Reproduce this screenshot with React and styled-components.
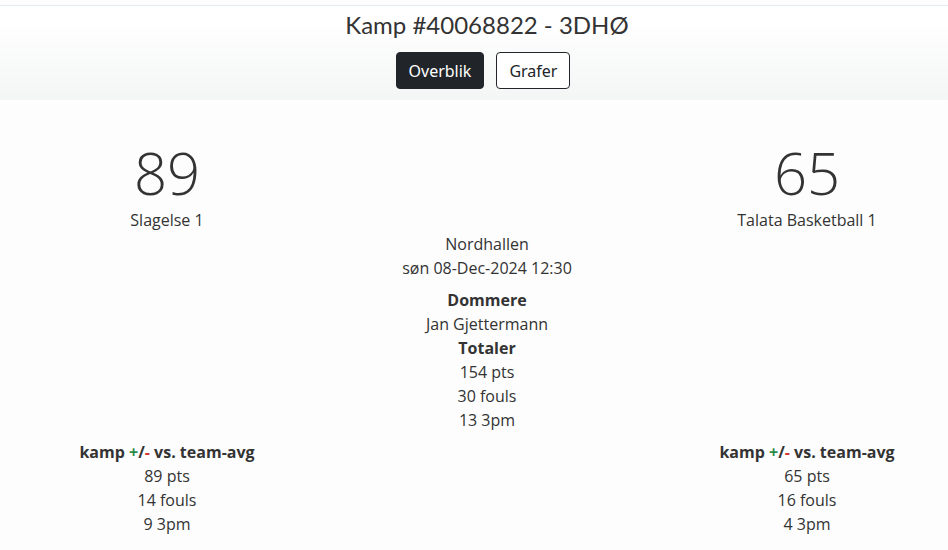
import React from 'react';
import styled, { createGlobalStyle } from 'styled-components';

const GlobalStyle = createGlobalStyle`
  html, body {
    margin: 0;
    padding: 0;
    background: #fdfdfd;
    overflow: hidden;
  }
  body {
    font-family: 'Open Sans', 'Noto Sans', sans-serif;
    font-size: 16px;
    line-height: 24px;
    color: #333;
  }
`;

const Page = styled.div`
  width: 948px;
  height: 550px;
  background: #fdfdfd;
`;

const Header = styled.header`
  margin-top: 5px;
  border-top: 1px solid #e1ebf4;
  background: linear-gradient(to bottom, #ffffff 15%, #f4f5f5 100%);
  height: 94px;
`;

const Container = styled.div`
  width: 960px;
  margin-left: 7px;
  box-sizing: border-box;
`;

const Title = styled.h1`
  margin: 0;
  padding-top: 3px;
  text-align: center;
  font-family: Lato, 'Open Sans', sans-serif;
  font-weight: 400;
  font-size: 24px;
  line-height: 31px;
  color: #333;
`;

const Tabs = styled.div`
  display: flex;
  justify-content: center;
  gap: 12px;
  margin-top: 12px;
  padding-right: 8px;
`;

const Tab = styled.button`
  font-family: 'Noto Sans', 'Open Sans', sans-serif;
  font-size: 16px;
  line-height: 22px;
  height: 37px;
  padding: 0 12px;
  border-radius: 4px;
  border: 1px solid #212529;
  background: ${({ $active }) => ($active ? '#212529' : '#fff')};
  color: ${({ $active }) => ($active ? '#fff' : '#212529')};
`;

const Grid = styled.main`
  display: grid;
  grid-template-columns: repeat(3, 320px);
  padding-top: 38px;
  text-align: center;
`;

const Cell = styled.div`
  grid-column: ${({ $col }) => $col};
  margin-top: ${({ $gap }) => $gap || 0}px;
`;

const Score = styled.div`
  font-size: 58px;
  line-height: 64px;
  margin: 3px 0;
  font-weight: 300;
  color: #333;
`;

const Line = styled.div`
  margin-top: ${({ $gap }) => $gap || 0}px;
`;

const Bold = styled.div`
  font-weight: 700;
  color: #333;
  margin-top: ${({ $gap }) => $gap || 0}px;
`;

const Plus = styled.span`
  color: #2e8b45;
`;

const Minus = styled.span`
  color: #d9382f;
`;

const TeamHead = ({ score, name }) => (
  <>
    <Score>{score}</Score>
    <Line>{name}</Line>
  </>
);

const Stats = ({ pts, fouls, threes }) => (
  <>
    <Bold>
      kamp <Plus>+</Plus>/<Minus>-</Minus> vs. team-avg
    </Bold>
    <Line>{pts} pts</Line>
    <Line>{fouls} fouls</Line>
    <Line>{threes} 3pm</Line>
  </>
);

export default function App() {
  return (
    <Page>
      <GlobalStyle />
      <Header>
        <Container>
          <Title>Kamp #40068822 - 3DHØ</Title>
          <Tabs>
            <Tab $active>Overblik</Tab>
            <Tab>Grafer</Tab>
          </Tabs>
        </Container>
      </Header>
      <Container>
        <Grid>
          <Cell $col={1}>
            <TeamHead score="89" name="Slagelse 1" />
          </Cell>
          <Cell $col={3}>
            <TeamHead score="65" name="Talata Basketball 1" />
          </Cell>
          <Cell $col={2}>
            <Line>Nordhallen</Line>
            <Line>søn 08-Dec-2024 12:30</Line>
            <Bold $gap={8}>Dommere</Bold>
            <Line>Jan Gjettermann</Line>
            <Bold>Totaler</Bold>
            <Line>154 pts</Line>
            <Line>30 fouls</Line>
            <Line>13 3pm</Line>
          </Cell>
          <Cell $col={1} $gap={8}>
            <Stats pts="89" fouls="14" threes="9" />
          </Cell>
          <Cell $col={3} $gap={8}>
            <Stats pts="65" fouls="16" threes="4" />
          </Cell>
        </Grid>
      </Container>
    </Page>
  );
}
